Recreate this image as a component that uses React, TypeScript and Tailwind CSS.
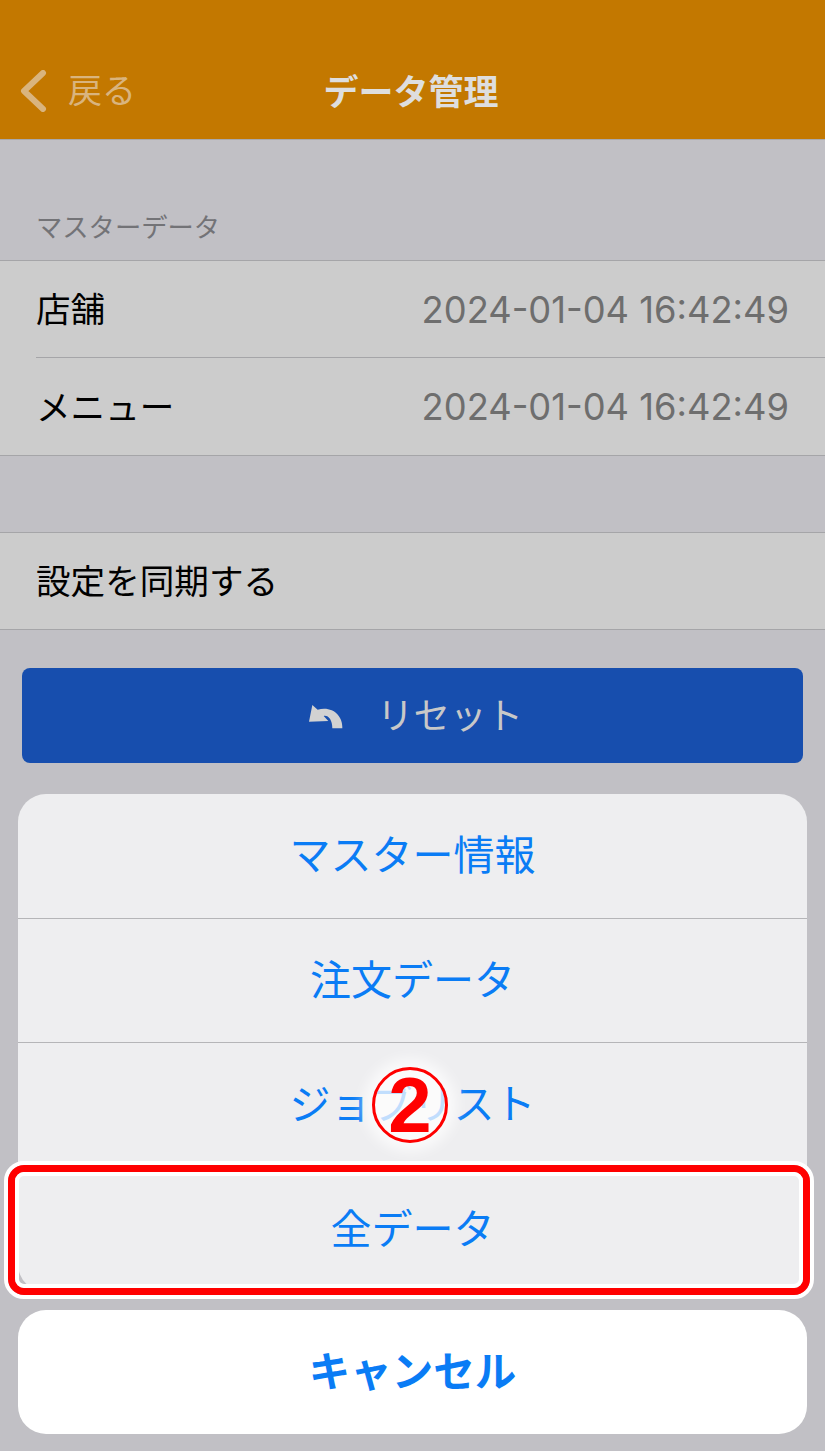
import React from 'react'

const jp = '[font-family:Inter,"Noto_Sans_CJK_JP",sans-serif]'

const Row = ({ label, date, inset }: { label: string; date?: string; inset?: boolean }) => (
    <div className="pl-9">
        <div className={`flex items-center justify-between pt-[2px] pr-9 text-[34.6px] ${date ? 'h-[97px]' : 'h-[96px]'} ${inset ? 'border-b border-[#a5a5a8]' : ''}`}>
            <span className="text-black">{label}</span>
            {date && <span className="text-[36.3px] text-[#6e6e6e]">{date}</span>}
        </div>
    </div>
)

const SheetItem = ({ label, last }: { label: string; last?: boolean }) => (
    <div className={`flex h-[124.5px] items-center justify-center text-[41px] text-[#0a7cf5] ${last ? '' : 'border-b border-[#b5b5b8]'}`}>
        {label}
    </div>
)

const App = () => {
    return (
        <div className={`relative h-[1451px] w-[825px] overflow-hidden bg-[#c1c0c5] ${jp}`}>
            {/* ヘッダー */}
            <header className="relative flex h-[140px] items-end justify-center border-b border-[#a9a9ad] bg-[#c37800] pr-[3px] pb-[23px]">
                <div className="absolute bottom-[27px] left-[20px] flex items-center gap-[21px]">
                    <svg width="27" height="42" viewBox="0 0 27 42" fill="none">
                        <path d="M23 3 L4 21 L23 39" stroke="#d9b47e" strokeWidth="6" strokeLinecap="round" strokeLinejoin="round" />
                    </svg>
                    <span className="text-[34px] leading-[42px] text-[#d9b47e]">戻る</span>
                </div>
                <h1 className="text-[35px] leading-[48px] font-bold text-[#dedede]">データ管理</h1>
            </header>

            <div className="flex h-[120px] items-end px-9 pb-[13px] text-[26.3px] leading-[38px] text-[#737377]">
                マスターデータ
            </div>

            <section className="border-y border-[#a5a5a8] bg-[#cccccc]">
                <Row label="店舗" date="2024-01-04 16:42:49" inset />
                <Row label="メニュー" date="2024-01-04 16:42:49" />
            </section>

            <section className="mt-[76px] border-y border-[#a5a5a8] bg-[#cccccc]">
                <Row label="設定を同期する" />
            </section>

            <div className="mt-[38px] px-[22px]">
                <button className="flex h-[95px] w-full items-center justify-center gap-[34px] rounded-lg bg-[#174eae] pt-[2px] pl-[7px] text-[36.5px] text-[#c8c8c8]">
                    <svg width="34" height="24" viewBox="0 0 102 72" fill="#d2d2d2">
                        <path d="M10 0 L0 50 L58 48 L44 33 C58 30 70 45 70 70 L100 70 C102 32 70 2 26 14 Z" />
                    </svg>
                    <span>リセット</span>
                </button>
            </div>

            {/* アクションシート */}
            <div className="absolute top-[794px] right-[18px] left-[18px] flex flex-col gap-[18px]">
                <div className="overflow-hidden rounded-[28px] bg-[#eeeef0]">
                    <SheetItem label="マスター情報" />
                    <SheetItem label="注文データ" />
                    <SheetItem label="ジョブリスト" />
                    <SheetItem label="全データ" last />
                </div>
                <div className="flex h-[124px] items-center justify-center rounded-[28px] bg-white text-[41.5px] font-bold text-[#0a7cf5]">
                    キャンセル
                </div>
            </div>

            {/* 注釈 */}
            <div className="absolute top-[1161px] left-[4px] h-[138px] w-[810px] rounded-[20px] border-[4px] border-white">
                <div className="h-full w-full rounded-[16px] border-[7px] border-[#ff0000]">
                    <div className="h-full w-full rounded-[9px] border-[4px] border-white" />
                </div>
            </div>
            <div className="absolute top-[1067px] left-[372px] flex h-[76px] w-[76px] items-center justify-center rounded-full border-[3px] border-[#ff0000] bg-white/75 font-['Liberation_Sans',sans-serif] text-[78px] leading-none font-bold text-[#ff0000] shadow-[0_0_14px_8px_rgba(255,255,255,0.75)]">
                2
            </div>
        </div>
    )
}

export default App
